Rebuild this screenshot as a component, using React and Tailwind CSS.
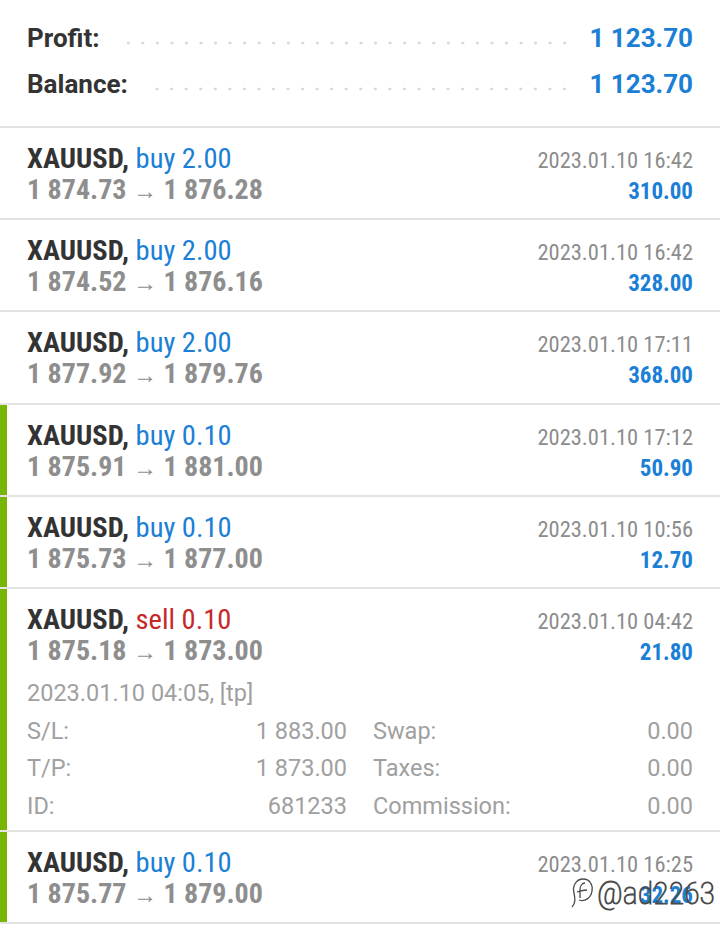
import React from "react";

const trades = [
  { side: "buy", vol: "2.00", open: "1 874.73", close: "1 876.28", time: "2023.01.10 16:42", profit: "310.00", bar: false },
  { side: "buy", vol: "2.00", open: "1 874.52", close: "1 876.16", time: "2023.01.10 16:42", profit: "328.00", bar: false },
  { side: "buy", vol: "2.00", open: "1 877.92", close: "1 879.76", time: "2023.01.10 17:11", profit: "368.00", bar: false, extra: true },
  { side: "buy", vol: "0.10", open: "1 875.91", close: "1 881.00", time: "2023.01.10 17:12", profit: "50.90", bar: true },
  { side: "buy", vol: "0.10", open: "1 875.73", close: "1 877.00", time: "2023.01.10 10:56", profit: "12.70", bar: true },
  { side: "sell", vol: "0.10", open: "1 875.18", close: "1 873.00", time: "2023.01.10 04:42", profit: "21.80", bar: true, expanded: true },
  { side: "buy", vol: "0.10", open: "1 875.77", close: "1 879.00", time: "2023.01.10 16:25", profit: "32.26", bar: true, watermark: true },
];

function SummaryRow({ label, value }) {
  return (
    <div className="flex h-[46px] items-center">
      <span className="text-[26px] font-bold text-[#333333]">{label}</span>
      <div className="ml-[24px] mr-[18px] mt-[10px] h-[4px] flex-1 bg-[radial-gradient(circle,#d9d9d9_1.4px,transparent_1.6px)] bg-[length:14.55px_4px] bg-[position:right_center]" />
      <span className="text-[26px] font-bold text-[#1b7fd6]">{value}</span>
    </div>
  );
}

function Detail({ label, value }) {
  return (
    <div className="flex justify-between">
      <span>{label}</span>
      <span>{value}</span>
    </div>
  );
}

function Trade({ t }) {
  const pb = t.expanded ? "pb-[5px]" : t.extra ? "pb-[14px]" : "pb-[13px]";
  return (
    <div className="relative flex border-b-2 border-[#e4e4e4]">
      <div className={`w-[7px] shrink-0 ${t.bar ? "bg-[#78b500]" : "bg-white"}`} />
      <div className={`flex-1 pl-[20px] pr-[27px] pt-[15px] ${pb}`}>
        <div className="[font-stretch:75%]">
          <div className="flex h-[31px] items-baseline justify-between">
            <span className="text-[28.5px] leading-[31px]">
              <span className="font-bold text-[#333333]">XAUUSD, </span>
              <span className={t.side === "sell" ? "text-[#c62828]" : "text-[#1b7fd6]"}>
                {t.side} {t.vol}
              </span>
            </span>
            <span className="text-[22.5px] text-[#8c8c8c]">{t.time}</span>
          </div>
          <div className="flex h-[31px] items-baseline justify-between">
            <span className="text-[28px] font-bold leading-[31px] text-[#8e8e8e]">
              {t.open} <span className="text-[24px]">→</span> {t.close}
            </span>
            <span className="text-[23px] font-bold text-[#1b7fd6]">{t.profit}</span>
          </div>
        </div>
        {t.expanded && (
          <div className="mt-[9px] text-[23.5px] leading-[37.5px] text-[#a0a0a0]">
            <div>2023.01.10 04:05, [tp]</div>
            <div className="grid grid-cols-2 gap-x-[26px]">
              <Detail label="S/L:" value="1 883.00" />
              <Detail label="Swap:" value="0.00" />
              <Detail label="T/P:" value="1 873.00" />
              <Detail label="Taxes:" value="0.00" />
              <Detail label="ID:" value="681233" />
              <Detail label="Commission:" value="0.00" />
            </div>
          </div>
        )}
      </div>
      {t.watermark && (
        <div className="absolute left-[567px] top-[42px] flex items-center gap-[2px] text-[32px] font-thin leading-[38px] text-white [-webkit-text-stroke:1px_#4a4a4a] [font-stretch:75%]">
          <svg width="28" height="34" viewBox="0 0 28 34" fill="none" stroke="#4a4a4a" strokeWidth="1.3">
            <path d="M5 31 C9 27 8 22 7 17 C5 9 10 3 16 3 C23 3 26 9 25 15 C24 22 18 26 12 24" fill="white" />
            <path d="M10 16 C13 15 17 14 20 14" />
            <path d="M18 7 C15 7 13 10 13 14 L13 22" />
          </svg>
          <span>@ad2263</span>
        </div>
      )}
    </div>
  );
}

export default function App() {
  return (
    <div className="min-h-[937px] w-[720px] bg-white font-['Roboto',sans-serif]">
      <div className="border-b-2 border-[#e4e4e4] px-[27px] pt-[15px] pb-[19px]">
        <SummaryRow label="Profit:" value="1 123.70" />
        <SummaryRow label="Balance:" value="1 123.70" />
      </div>
      {trades.map((t, i) => (
        <Trade key={i} t={t} />
      ))}
    </div>
  );
}
